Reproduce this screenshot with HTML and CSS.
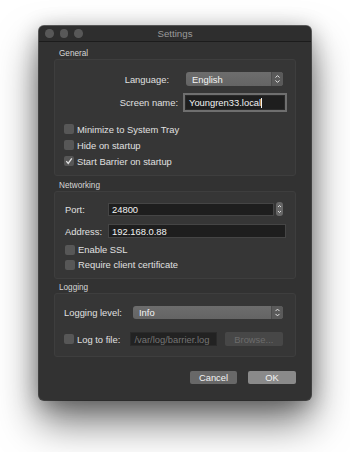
FILE: index.html
```html
<!DOCTYPE html>
<html lang="en">
  <head>
    <meta charset="UTF-8" />
    <meta name="viewport" content="width=device-width, initial-scale=1.0" />
    <title>Settings</title>
    <link rel="stylesheet" href="styles.css">
  </head>
  <body>
    <main class="screen">
      <div class="window">
        <!-- Title bar -->
        <div class="titlebar">
          <div class="lights">
            <span class="light"></span>
            <span class="light"></span>
            <span class="light"></span>
          </div>
          <div class="title">Settings</div>
          <div></div>
        </div>

        <div class="content">
          <!-- General -->
          <div class="group-title first">General</div>
          <div class="group general">
            <div class="form-row lang-row">
              <span class="label">Language:</span>
              <div class="combo lang-combo">
                <span class="combo-text">English</span>
                <span class="stepper">
                  <svg width="11" height="14" viewBox="0 0 11 14"><path d="M3.5 5.6 L5.5 3.6 L7.5 5.6 M3.5 8.4 L5.5 10.4 L7.5 8.4" stroke="#e6e6e6" stroke-width="1" fill="none"/></svg>
                </span>
              </div>
            </div>
            <div class="form-row name-row">
              <span class="label">Screen name:</span>
              <div class="input focused">Youngren33.local<span class="caret"></span></div>
            </div>
            <div class="checks">
              <div class="check-row"><span class="check"></span>Minimize to System Tray</div>
              <div class="check-row"><span class="check"></span>Hide on startup</div>
              <div class="check-row">
                <span class="check">
                  <svg width="10" height="10" viewBox="0 0 10 10"><path d="M2.3 5.2 L4.2 7.4 L7.8 2.3" stroke="#e2e2e2" stroke-width="1.3" fill="none"/></svg>
                </span>Start Barrier on startup
              </div>
            </div>
          </div>

          <!-- Networking -->
          <div class="group-title">Networking</div>
          <div class="group networking">
            <div class="net-grid">
              <span class="label">Port:</span>
              <div class="port-field">
                <div class="input port-input">24800</div>
                <span class="spin">
                  <svg width="7" height="14" viewBox="0 0 7 14"><path d="M2 5 L3.5 3.5 L5 5 M2 9 L3.5 10.5 L5 9" stroke="#e6e6e6" stroke-width="0.9" fill="none"/></svg>
                </span>
              </div>
              <span class="label">Address:</span>
              <div class="input addr-input">192.168.0.88</div>
            </div>
            <div class="checks net-checks">
              <div class="check-row tight"><span class="check"></span>Enable SSL</div>
              <div class="check-row tight"><span class="check"></span>Require client certificate</div>
            </div>
          </div>

          <!-- Logging -->
          <div class="group-title third">Logging</div>
          <div class="group logging">
            <div class="log-level">
              <span class="label level-label">Logging level:</span>
              <div class="combo level-combo">
                <span class="combo-text">Info</span>
                <span class="stepper">
                  <svg width="11" height="13" viewBox="0 0 11 13"><path d="M3.5 5.1 L5.5 3.1 L7.5 5.1 M3.5 7.9 L5.5 9.9 L7.5 7.9" stroke="#e6e6e6" stroke-width="1" fill="none"/></svg>
                </span>
              </div>
            </div>
            <div class="log-file">
              <span class="check"></span>
              <span class="label file-label">Log to file:</span>
              <div class="input path-input">/var/log/barrier.log</div>
              <div class="btn disabled">Browse...</div>
            </div>
          </div>

          <!-- Dialog buttons -->
          <div class="actions">
            <div class="btn cancel">Cancel</div>
            <div class="btn ok">OK</div>
          </div>
        </div>
      </div>
    </main>
  </body>
</html>
```

FILE: styles.css
```css
html,
body {
  background: #ffffff;
}
body {
  margin: 0;
  font-family: "Liberation Sans", Arial, sans-serif;
  font-size: 9.4px;
  color: #e0e0e0;
}
.screen {
  padding: 26px 0 60px 39px;
}
.window {
  width: 272px;
  height: 374px;
  background: #323232;
  border-radius: 5px;
  display: flex;
  flex-flow: column nowrap;
  box-shadow: 0 0 0 1px rgba(0, 0, 0, 0.6), 0 22px 40px rgba(0, 0, 0, 0.55),
    0 4px 22px rgba(0, 0, 0, 0.3);
}
.titlebar {
  box-sizing: border-box;
  height: 16px;
  flex: none;
  background: #2e2e2e;
  border-bottom: 1px solid #1c1c1c;
  border-radius: 5px 5px 0 0;
  display: grid;
  grid-template-columns: 1fr auto 1fr;
  align-items: center;
}
.lights {
  display: flex;
  column-gap: 6px;
  padding-left: 6px;
}
.light {
  width: 8.5px;
  height: 8.5px;
  border-radius: 50%;
  background: #585858;
}
.title {
  font-size: 9.7px;
  color: #9a9a9a;
}
.content {
  padding: 6px 15px 0 15px;
}
.group-title {
  height: 11px;
  line-height: 11px;
  font-size: 8.2px;
  padding-left: 5px;
  margin-top: 4px;
  color: #d6d6d6;
}
.group-title.first {
  margin-top: 0;
}
.group-title.third {
  margin-top: 3px;
}
.group {
  box-sizing: border-box;
  background: #363636;
  border: 1px solid #3e3e3e;
  border-radius: 3px;
}
.label {
  white-space: nowrap;
}

/* General */
.general {
  height: 117px;
  padding-top: 12px;
}
.form-row {
  display: flex;
  justify-content: flex-end;
  align-items: center;
}
.lang-row {
  height: 14px;
  padding-right: 12px;
  column-gap: 17px;
}
.name-row {
  height: 15px;
  margin-top: 9px;
  padding-right: 10px;
  column-gap: 7px;
}
.combo {
  box-sizing: border-box;
  display: flex;
  align-items: center;
  background: linear-gradient(#6d6d6d, #646464);
  border-radius: 3px;
  color: #f4f4f4;
  overflow: hidden;
}
.combo-text {
  flex: 1;
  padding-left: 6px;
}
.stepper {
  display: flex;
  background: #5a5a5a;
  border-left: 1px solid #4c4c4c;
}
.lang-combo {
  width: 97px;
  height: 14px;
}
.input {
  box-sizing: border-box;
  background: #1e1e1e;
  border: 1px solid #454545;
  color: #f2f2f2;
  display: flex;
  align-items: center;
  padding-left: 3px;
  white-space: nowrap;
}
.focused {
  width: 100px;
  height: 15px;
  box-shadow: 0 0 0 2px #6f6f6f;
  border-color: #2a2a2a;
}
.caret {
  width: 1px;
  height: 10px;
  background: #f2f2f2;
}
.checks {
  margin-top: 11px;
  padding-left: 9px;
}
.check-row {
  height: 16px;
  display: flex;
  align-items: center;
  column-gap: 3px;
}
.check-row.tight {
  height: 15px;
}
.check {
  width: 10px;
  height: 10px;
  flex: none;
  border-radius: 2px;
  background: #575757;
  display: flex;
}

/* Networking */
.networking {
  height: 88px;
  padding: 10px 9px 0 10px;
}
.net-grid {
  display: grid;
  grid-template-columns: 43px 1fr;
  row-gap: 8px;
  align-items: center;
}
.port-field {
  display: flex;
  align-items: center;
  column-gap: 2px;
}
.port-input {
  width: 166px;
  height: 13px;
}
.spin {
  width: 7px;
  height: 14px;
  border-radius: 3px;
  background: #676767;
  display: flex;
}
.addr-input {
  height: 14px;
}
.net-checks {
  margin-top: 4px;
  padding-left: 0;
}

/* Logging */
.logging {
  height: 64px;
  padding: 12px 12px 0 9px;
}
.log-level {
  display: flex;
  align-items: center;
  height: 13px;
}
.level-label {
  width: 69px;
}
.level-combo {
  flex: 1;
  height: 13px;
}
.log-file {
  display: flex;
  align-items: center;
  height: 14px;
  margin-top: 13px;
}
.file-label {
  margin-left: 3px;
  width: 54px;
}
.path-input {
  width: 87px;
  height: 14px;
  background: #222222;
  border-color: #2a2a2a;
  color: #747474;
}
.btn {
  box-sizing: border-box;
  height: 13px;
  border-radius: 2px;
  display: flex;
  align-items: center;
  justify-content: center;
  color: #f2f2f2;
}
.disabled {
  width: 59px;
  height: 14px;
  margin-left: 8px;
  background: #474747;
  color: #6c6c6c;
}

/* Dialog buttons */
.actions {
  display: flex;
  justify-content: flex-end;
  column-gap: 11px;
  margin-top: 14px;
}
.cancel {
  width: 47px;
  background: #686868;
}
.ok {
  width: 48px;
  background: #8a8a8a;
}
```
